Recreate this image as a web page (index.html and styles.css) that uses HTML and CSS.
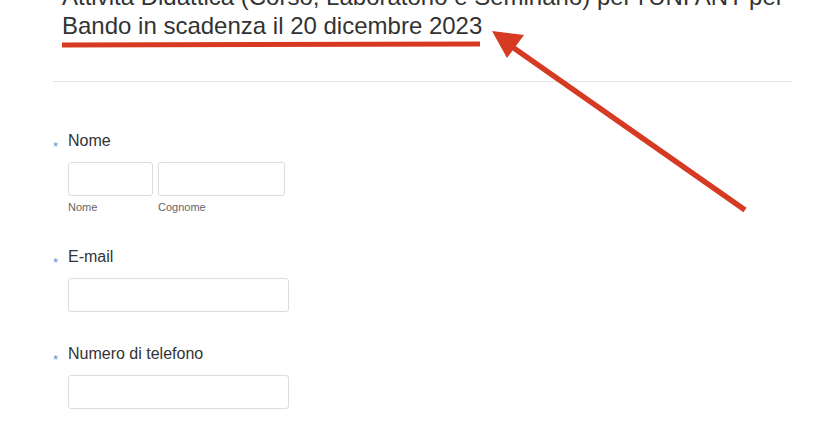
FILE: index.html
```html
<!DOCTYPE html>
<html lang="it">
<head>
<meta charset="utf-8">
<link rel="stylesheet" href="styles.css">
</head>
<body>
<div class="page">
  <header class="header">
    <h1 class="title">Attività Didattica (Corso, Laboratorio e Seminario) per l'UNI ANT per <span class="hl">Bando in scadenza il 20 dicembre 2023</span></h1>
  </header>
  <hr class="divider">
  <form class="form">
    <div class="field">
      <label class="label"><span class="req">*</span>Nome</label>
      <div class="row">
        <div class="sub">
          <input class="input input-first" type="text">
          <span class="sublabel">Nome</span>
        </div>
        <div class="sub">
          <input class="input input-last" type="text">
          <span class="sublabel">Cognome</span>
        </div>
      </div>
    </div>
    <div class="field">
      <label class="label"><span class="req">*</span>E-mail</label>
      <div class="row"><input class="input input-wide" type="text"></div>
    </div>
    <div class="field">
      <label class="label"><span class="req">*</span>Numero di telefono</label>
      <div class="row"><input class="input input-wide" type="text"></div>
    </div>
  </form>
  <svg class="arrow" width="820" height="430" viewBox="0 0 820 430">
    <line x1="745" y1="210" x2="508" y2="44" stroke="#d63a22" stroke-width="5.5"/>
    <polygon points="492,31 524,35 507,58" fill="#d63a22"/>
  </svg>
</div>
</body>
</html>
```

FILE: styles.css
```css
html, body {
  margin: 0;
  padding: 0;
  background: #fff;
}
body {
  font-family: "Liberation Sans", Arial, sans-serif;
  color: #333;
  overflow: hidden;
}
.page {
  position: relative;
  width: 820px;
  height: 430px;
  overflow: hidden;
}
.header {
  padding: 0 0 0 62px;
  margin-top: -18px;
}
.title {
  margin: 0;
  font-weight: normal;
  font-size: 24px;
  line-height: 29px;
  color: #333;
  width: 750px;
}
.hl {
  display: inline-block;
  position: relative;
}
.hl::after {
  content: "";
  position: absolute;
  left: 0;
  right: 2px;
  top: 31px;
  height: 4.5px;
  background: #d63a22;
  transform: rotate(-0.15deg);
}
.divider {
  border: 0;
  border-top: 1px solid #e4e4e4;
  margin: 41px 28px 0 53px;
}
.form {
  padding: 49px 0 0 53px;
}
.field {
  margin-bottom: 32px;
}
.label {
  display: flex;
  align-items: center;
  font-size: 16px;
  line-height: 20px;
  color: #333;
  height: 20px;
}
.req {
  color: #5f93d8;
  font-size: 13px;
  width: 15px;
  padding-top: 11px;
  line-height: 10px;
}
.row {
  display: flex;
  gap: 5px;
  padding-left: 15px;
  margin-top: 11px;
}
.sub {
  display: flex;
  flex-direction: column;
}
.input {
  box-sizing: border-box;
  height: 34px;
  border: 1px solid #dcdcdc;
  border-radius: 3px;
  background: #fff;
  margin: 0;
  padding: 0;
}
.input-first { width: 85px; }
.input-last { width: 127px; }
.input-wide { width: 221px; }
.sublabel {
  font-size: 11px;
  line-height: 16px;
  color: #666;
  margin-top: 3px;
}
.arrow {
  position: absolute;
  left: 0;
  top: 0;
  pointer-events: none;
}
```
